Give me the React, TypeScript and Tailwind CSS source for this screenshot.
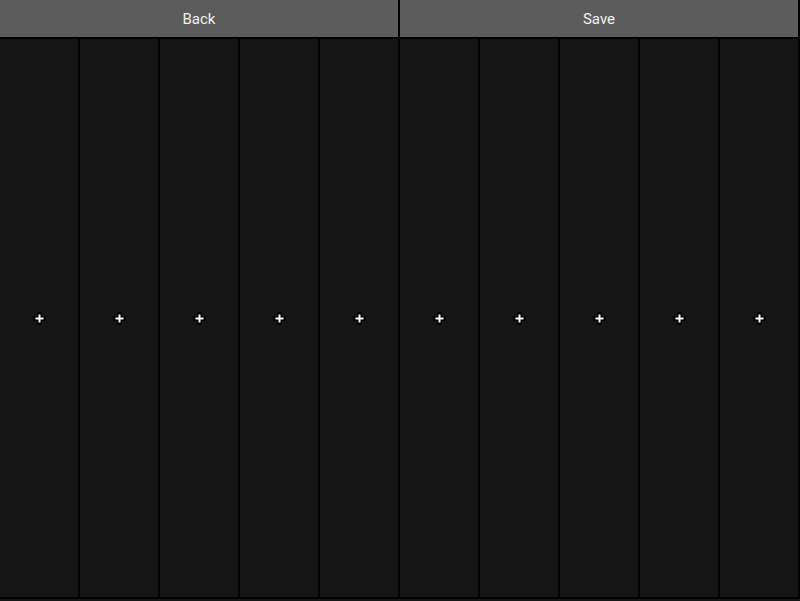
const cols = Array.from({ length: 10 });

function PlusMark() {
  return (
    <svg width="13" height="13" viewBox="0 0 13 13">
      <path d="M6.5 1.5v10M1.5 6.5h10" stroke="#000" strokeWidth="4.5" strokeLinecap="round" />
      <path d="M6.5 2.5v8M2.5 6.5h8" stroke="#fff" strokeWidth="2" />
    </svg>
  );
}

export default function App() {
  return (
    <div className="w-[800px] h-[601px] bg-black flex flex-col overflow-hidden" style={{ fontFamily: "Roboto, 'Liberation Sans', sans-serif" }}>
      <div className="flex h-[39px] shrink-0 border-b-2 border-black">
        <button className="flex-1 bg-[#5c5c5c] text-[#f0f0f0] text-[15px] pt-[2px] border-r-2 border-black">Back</button>
        <button className="flex-1 bg-[#5c5c5c] text-[#f0f0f0] text-[15px] pt-[2px] border-r-2 border-black">Save</button>
      </div>
      <div className="flex h-[560px] shrink-0 border-b-2 border-black">
        {cols.map((_, i) => (
          <div key={i} className="flex-1 bg-[#161616] border-r-2 border-black flex items-center justify-center">
            <PlusMark />
          </div>
        ))}
      </div>
      <div className="flex-1 bg-[#161616]" />
    </div>
  );
}
